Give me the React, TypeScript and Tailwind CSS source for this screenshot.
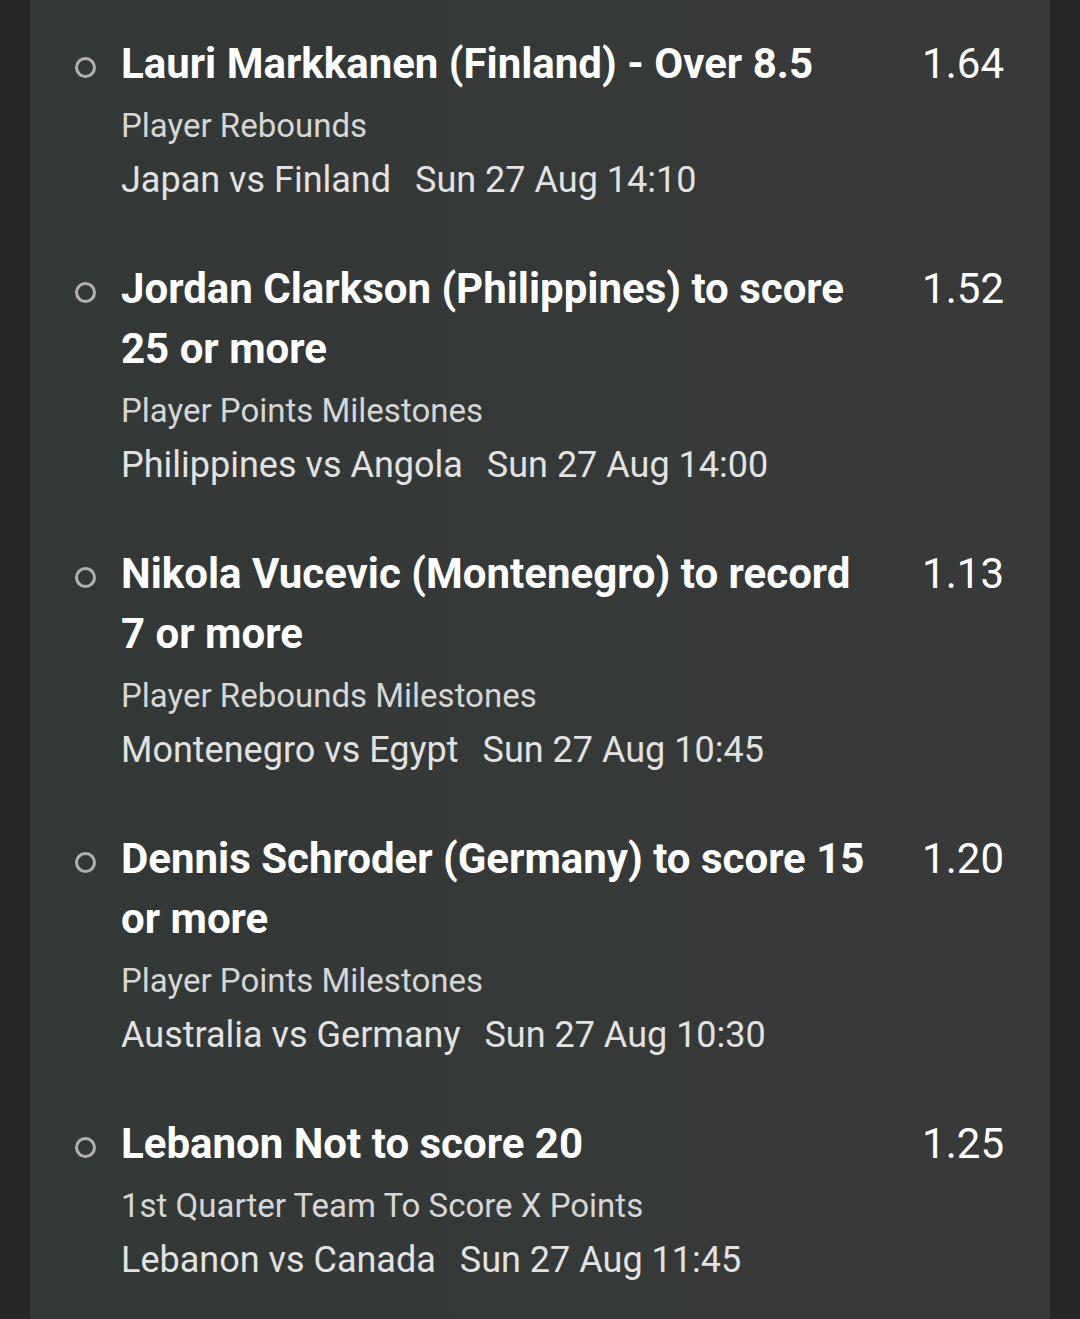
import React from "react";

type Bet = { title: string; market: string; match: string; time: string; odds: string };

const bets: Bet[] = [
  { title: "Lauri Markkanen (Finland) - Over 8.5", market: "Player Rebounds", match: "Japan vs Finland", time: "Sun 27 Aug 14:10", odds: "1.64" },
  { title: "Jordan Clarkson (Philippines) to score 25 or more", market: "Player Points Milestones", match: "Philippines vs Angola", time: "Sun 27 Aug 14:00", odds: "1.52" },
  { title: "Nikola Vucevic (Montenegro) to record 7 or more", market: "Player Rebounds Milestones", match: "Montenegro vs Egypt", time: "Sun 27 Aug 10:45", odds: "1.13" },
  { title: "Dennis Schroder (Germany) to score 15 or more", market: "Player Points Milestones", match: "Australia vs Germany", time: "Sun 27 Aug 10:30", odds: "1.20" },
  { title: "Lebanon Not to score 20", market: "1st Quarter Team To Score X Points", match: "Lebanon vs Canada", time: "Sun 27 Aug 11:45", odds: "1.25" },
];

export default function App() {
  return (
    <div
      className="w-[1080px] h-[1319px] bg-[#272727] px-[30px] overflow-hidden"
      style={{ fontFamily: "Roboto, 'Noto Sans', sans-serif" }}
    >
      <div className="h-full bg-gradient-to-r from-[#323836] to-[#383a39] pt-[34px] pl-[45px] pr-[46px] flex flex-col gap-[51px]">
        {bets.map((b, i) => (
          <div key={i} className="flex items-start">
            <div className="w-[46px] shrink-0 h-[60px] flex items-center">
              <div className="w-[21px] h-[21px] rounded-full border-[3px] border-[#b0b0b0] mt-[6px]" />
            </div>
            <div className="flex-1 min-w-0 pr-[42px]">
              <div className="text-[42px] leading-[60px] font-bold text-white">{b.title}</div>
              <div className="mt-[8px] text-[33px] leading-[48px] text-[#d6d6d6]">{b.market}</div>
              <div className="mt-[2px] text-[36px] leading-[56px] text-[#e2e2e2] flex gap-[24px]">
                <span>{b.match}</span>
                <span>{b.time}</span>
              </div>
            </div>
            <div className="w-[90px] shrink-0 text-[42px] leading-[60px] text-white text-right">{b.odds}</div>
          </div>
        ))}
      </div>
    </div>
  );
}
